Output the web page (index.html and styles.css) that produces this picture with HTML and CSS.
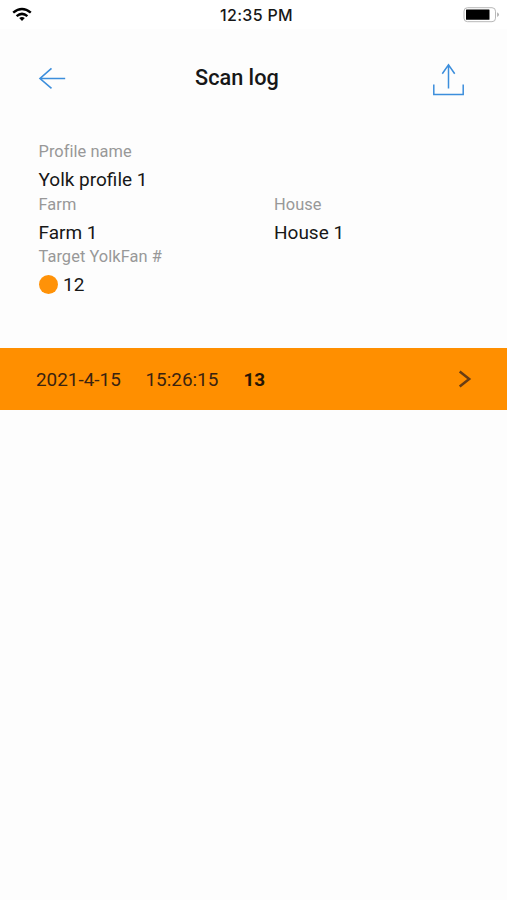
FILE: index.html
```html
<!DOCTYPE html>
<html lang="en">
<head>
<meta charset="utf-8">
<title>Scan log</title>
<link rel="stylesheet" href="styles.css">
</head>
<body>
<div class="status">
  <svg class="wifi" width="20" height="15" viewBox="0 0 20 15" fill="none" stroke="#000" stroke-width="2.5">
    <path d="M1.2 5.6Q10 -1.6 18.8 5.6M4.6 9.1Q10 4.7 15.4 9.1"/>
    <path d="M7.2 10.9Q10 8.9 12.8 10.9L10 14Z" fill="#000" stroke="none"/>
  </svg>
  <span class="time">12:35 PM</span>
  <svg class="battery" width="38" height="17" viewBox="0 0 38 17">
    <rect x="1" y="1.7" width="31.5" height="14" rx="3.5" fill="#fff" stroke="#b8b8b8" stroke-width="1"/>
    <rect x="3" y="3.5" width="23.5" height="10.3" rx="0.5" fill="#000"/>
    <path d="M34.3 6.2Q37.4 8.6 34.3 11Z" fill="#999"/>
  </svg>
</div>
<header class="header">
  <svg class="back" width="28" height="22" viewBox="0 0 28 22" fill="none" stroke="#3c8edc" stroke-width="1.6">
    <path d="M27.2 11.5H2M13.5 1.3L2 11.5L13.5 21.3"/>
  </svg>
  <h1 class="title">Scan log</h1>
  <svg class="share" width="32" height="33" viewBox="0 0 32 33" fill="none" stroke="#3c8edc" stroke-width="1.5">
    <path d="M16.5 25.5V2M10.3 10.7L16.5 1.8L22.7 10.7M1.8 21.5V31.5H31.2V21.5"/>
  </svg>
</header>
<main>
  <section class="details">
    <div class="field wide"><div class="label">Profile name</div><div class="value">Yolk profile 1</div></div>
    <div class="field"><div class="label">Farm</div><div class="value">Farm 1</div></div>
    <div class="field"><div class="label">House</div><div class="value">House 1</div></div>
    <div class="field wide"><div class="label">Target YolkFan #</div><div class="value color"><span class="dot"></span>12</div></div>
  </section>
  <div class="row">
    <span class="date">2021-4-15</span>
    <span class="hour">15:26:15</span>
    <span class="score">13</span>
    <svg class="chevron" width="14" height="18" viewBox="0 0 14 18" fill="none" stroke="#693d13" stroke-width="2.5">
      <path d="M1.7 1.5L11.2 9L1.7 16.5"/>
    </svg>
  </div>
</main>
</body>
</html>
```
FILE: styles.css
```css
* { box-sizing: border-box; }
body {
  margin: 0;
  min-height: 900px;
  background: #fdfdfd;
  color: #171717;
  font-family: Roboto, sans-serif;
}
.status {
  display: grid;
  grid-template-columns: 1fr auto 1fr;
  align-items: center;
  height: 29px;
  padding: 0 6px 0 12px;
  background: #fff;
}
.time {
  font: 500 16px/20px Inter, sans-serif;
  letter-spacing: 0.3px;
}
.battery { justify-self: end; }
.header {
  display: grid;
  grid-template-columns: 157px auto 1fr;
  align-items: center;
  height: 98px;
  padding: 0 43px 0 38px;
}
.title {
  margin: 0;
  font-size: 21.7px;
  font-weight: 500;
  line-height: 28px;
}
.share {
  justify-self: end;
  margin-top: 2px;
}
.details {
  display: grid;
  grid-template-columns: 235.5px 1fr;
  height: 221px;
  align-content: start;
  padding: 12px 38.5px 0;
}
.wide { grid-column: 1 / -1; }
.field { height: 52.6px; }
.label {
  height: 26px;
  color: #989898;
  font-size: 16.4px;
  line-height: 25px;
  letter-spacing: 0.06px;
}
.value {
  font-size: 19px;
  line-height: 29px;
}
.color {
  display: flex;
  align-items: center;
  gap: 5.5px;
}
.dot {
  width: 19px;
  height: 19px;
  border-radius: 50%;
  background: #ff9208;
}
.row {
  display: flex;
  align-items: center;
  height: 62px;
  padding: 0 35px 0 36px;
  background: #ff8f00;
  color: #3a2310;
  font-size: 18.9px;
}
.date { width: 109.5px; }
.hour { width: 98px; }
.score { color: #251505; font-weight: 700; }
.chevron { margin-left: auto; }
```
